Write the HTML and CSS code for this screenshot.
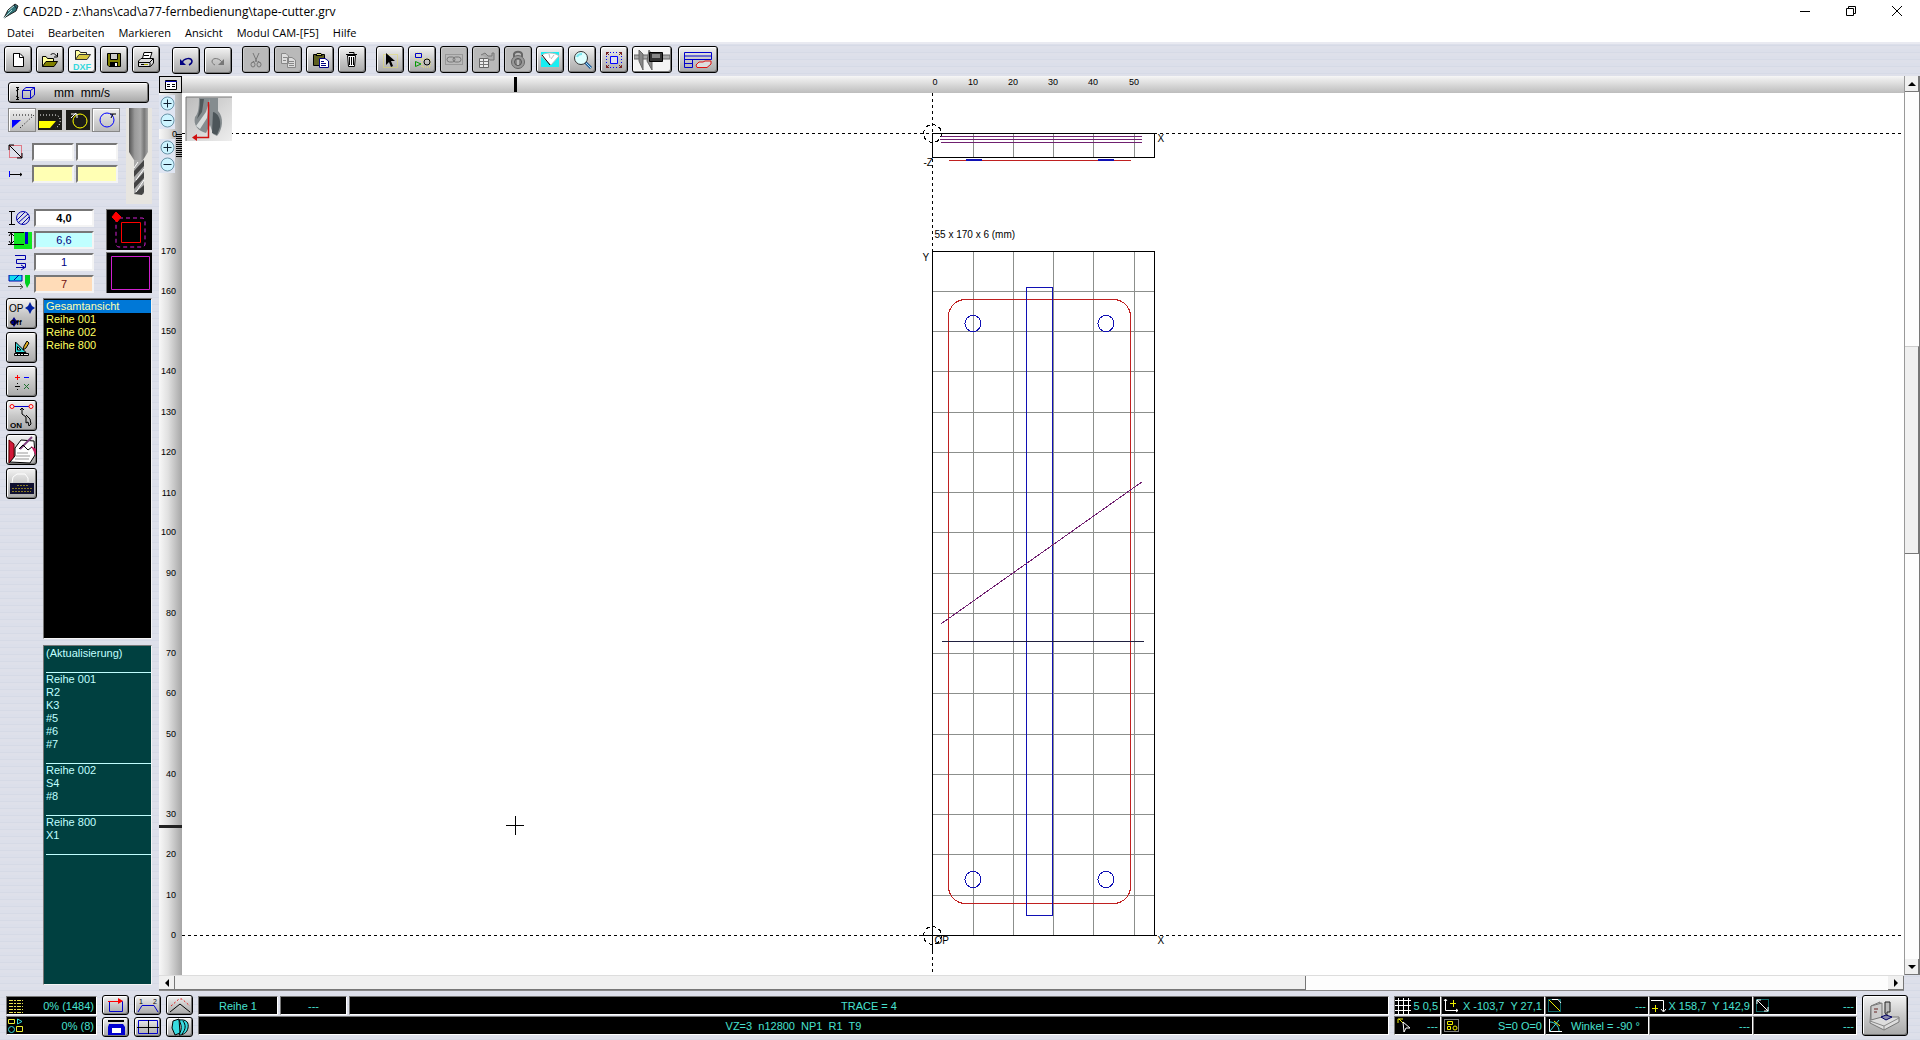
FILE: index.html
```html
<!DOCTYPE html>
<html lang="de">
<head>
    <meta charset="UTF-8">
    <meta name="viewport" content="width=device-width, initial-scale=1.0">
    <title>CAD2D - z:\hans\cad\a77-fernbedienung\tape-cutter.grv</title>
    <link rel="stylesheet" href="styles.css">
</head>
<body>
    <header class="titlebar">
        <svg class="app-icon" width="16" height="16" viewBox="0 0 16 16"><path d="M1 15L5 7L12 1L15 3L13 8L6 12Z" fill="#2f7377" stroke="#222"/><path d="M1 15L9 7M5 8L11 3" stroke="#b7dede"/><path d="M11 2L14 6" stroke="#123"/></svg>
        <span class="title">CAD2D - z:\hans\cad\a77-fernbedienung\tape-cutter.grv</span>
        <div class="window-buttons">
            <button aria-label="Minimieren"><svg width="10" height="10"><path d="M0 5.500H10" stroke="#000"/></svg></button>
            <button aria-label="Wiederherstellen"><svg width="10" height="10"><path d="M.5 2.500H7.500V9.500H.5ZM2.500 2V.5H9.500V7.500H8" fill="none" stroke="#000"/></svg></button>
            <button aria-label="Schließen"><svg width="10" height="10"><path d="M0 0L10 10M10 0L0 10" stroke="#000"/></svg></button>
        </div>
    </header>

    <nav class="menubar">
        <a href="#">Datei</a>
        <a href="#">Bearbeiten</a>
        <a href="#">Markieren</a>
        <a href="#">Ansicht</a>
        <a href="#">Modul CAM-[F5]</a>
        <a href="#">Hilfe</a>
    </nav>

    <div class="toolbar">
        <div class="group">
            <button class="btn" aria-label="Neu"><svg width="20" height="20"><path d="M5.500 3.500H12L15.500 7V16.500H5.500Z" fill="#fff" stroke="#000"/><path d="M11.500 4V7.500H15" fill="none" stroke="#000"/></svg></button>
            <button class="btn" aria-label="Öffnen"><svg width="20" height="20"><path d="M2.500 16.500V6.500H6L7.500 8.500H13.500V11" fill="#ffff9c" stroke="#000"/><path d="M2.500 16.500L6 11.500H17.500L14 16.500Z" fill="#808000" stroke="#000"/><path d="M10.500 5C12 3 15 3 16.500 6M17.500 3V7H14" fill="none" stroke="#000"/></svg></button>
            <button class="btn lit" aria-label="DXF öffnen"><svg width="24" height="24"><path d="M5.500 11.500V2.500H9L10.500 4.500H16.500V6" fill="#ffffa0" stroke="#222"/><path d="M5.500 11.500L9 6.500H20.500L17 11.500Z" fill="#d8c840" stroke="#333"/><text class="dxf" x="3" y="22">DXF</text></svg></button>
            <button class="btn" aria-label="Speichern"><svg width="20" height="20"><path d="M3.500 3.500H16.500V16.500H5L3.500 15Z" fill="#808000" stroke="#000"/><path d="M6.500 3.500H13.500V9.500H6.500Z" fill="#ccc" stroke="#000"/><path d="M6 12H14V16H6Z"/><path d="M11 13H13V16H11Z" fill="#fff"/></svg></button>
            <button class="btn" aria-label="Drucken"><svg width="20" height="20"><path d="M6.500 8.500L8 2.500H16L14 8.500Z" fill="#fff" stroke="#000"/><path d="M2.500 11L5 8.500H17.500V13L14.500 16.500H2.500Z" fill="#ddd" stroke="#000"/><path d="M3 12.500H14V16M14 12L17 9M5 14.500H11M8 5.500H13" fill="none" stroke="#000"/><path d="M8 14.500H12" stroke="#a6a600"/></svg></button>
        </div>
        <div class="group undo">
            <button class="btn" aria-label="Rückgängig"><svg width="20" height="20"><path d="M5.500 12C8 7 15 6 16 10C16 12 15 13 13 14" fill="none" stroke="#000080" stroke-width="1.500"/><path d="M4 8V14H10Z" fill="#000080"/></svg></button>
            <button class="btn" aria-label="Wiederholen"><svg width="20" height="20"><path d="M14.500 12C12 7 5 6 4 10C4 12 5 13 7 14" fill="none" stroke="#777"/><path d="M16 8V14H10Z" fill="#777"/></svg></button>
        </div>
        <div class="group">
            <button class="btn off" aria-label="Ausschneiden"><svg width="20" height="20"><path d="M7 3L11 12M13 3L9 12M8 11L6 13M12 11L14 13" stroke="#777" fill="none"/><ellipse cx="7" cy="14.500" rx="2" ry="2.500" fill="none" stroke="#777"/><ellipse cx="13" cy="14.500" rx="2" ry="2.500" fill="none" stroke="#777"/></svg></button>
            <button class="btn off" aria-label="Kopieren"><svg width="20" height="20"><path d="M3.500 3.500H8L10.500 6V13.500H3.500ZM9.500 7.500H14L17.500 10V17.500H9.500Z" fill="#ddd" stroke="#888"/><path d="M5 7.500H9M5 10.500H8M11 11.500H16M11 13.500H16M11 15.500H16" stroke="#888"/></svg></button>
            <button class="btn" aria-label="Einfügen"><svg width="20" height="20"><path d="M3.500 4.500H14.500V15.500H3.500Z" fill="#5f6020" stroke="#000"/><path d="M6 5.500L7 3.500H11L12 5.500Z" fill="#dd6" stroke="#000"/><path d="M9.500 8.500H15L18.500 11V17.500H9.500Z" fill="#fff" stroke="#000080"/><path d="M11 11.500H14M11 13.500H16M11 15.500H16" stroke="#000080"/></svg></button>
            <button class="btn" aria-label="Löschen"><svg width="20" height="20"><path d="M5.500 5.500H13.500L12.500 16.500H6.500Z" fill="#fff" stroke="#000"/><path d="M4 4.500H15M7 2.500H12V4M7.500 7V15M9.500 7V15M11.500 7V15" fill="none" stroke="#000"/></svg></button>
        </div>
        <div class="group">
            <button class="btn" aria-label="Auswählen"><svg width="20" height="20"><path d="M3.500 4.500H17.500V17.500H3.500Z" fill="none" stroke="#e4dc5c" stroke-dasharray="1 1"/><path d="M6 3V15L9 12L11 17L13 16L11 11H15Z"/></svg></button>
            <button class="btn" aria-label="Objekte"><svg width="20" height="20"><path d="M3 3H10V17H18V9H3Z" fill="none" stroke="#eee56a" stroke-dasharray="1 1"/><path d="M3.500 3.500H9.500V7.500H3.500Z" fill="none" stroke="#00c"/><path d="M3.500 11.500V16.500L9 14Z" fill="none" stroke="#090"/><circle cx="15" cy="12" r="3" fill="none" stroke="#000"/></svg></button>
            <button class="btn off" aria-label="Verbinden"><svg width="20" height="20"><path d="M1.500 4.500H18.500V14.500H1.500Z" fill="none" stroke="#777" stroke-dasharray="1 1"/><rect x="3" y="7" width="8" height="5" rx="2.500" fill="none" stroke="#777"/><rect x="9" y="7" width="8" height="5" rx="2.500" fill="none" stroke="#777"/></svg></button>
            <button class="btn off" aria-label="Eigenschaften"><svg width="20" height="20"><path d="M3.500 8.500H12.500V17.500H3.500Z" fill="#eee" stroke="#666"/><path d="M4 11.500H12M4 14.500H12M7.500 9V17" stroke="#777"/><path d="M5 5L9 3L12 6H16V3H18V10H14L11 8" fill="#aaa" stroke="#777"/></svg></button>
            <button class="btn off" aria-label="Sperren"><svg width="22" height="22"><path d="M7 8V5C8 2 14 2 15 5V8" fill="none" stroke="#666" stroke-width="2"/><circle cx="11" cy="13" r="6.500" fill="#999" stroke="#666"/><circle cx="11" cy="13" r="3.500" fill="#888" stroke="#555"/><path d="M10 11H12V16H10Z" fill="#bbb"/></svg></button>
            <button class="btn" aria-label="Ansicht"><svg width="20" height="20"><path d="M1 2H19V17H1Z" fill="#19eef2"/><path d="M1 6C4 2 15 2 19 6L11 15Z" fill="#fff" stroke="#bbb"/><path d="M2 5L10 15" stroke="#000"/><path d="M9 4L10 8M14 5L11 9" stroke="#bbb"/></svg></button>
            <button class="btn" aria-label="Zoom"><svg width="22" height="22"><path d="M14 13L20 19" stroke="#235b98" stroke-width="3"/><path d="M15 14L20 19" stroke="#9ce4ff"/><circle cx="10" cy="9" r="6.500" fill="#dff" stroke="#333"/><path d="M6 8C7 5 9 5 11 5" fill="none" stroke="#7be5ed" stroke-width="2"/></svg></button>
            <button class="btn" aria-label="Alles zeigen"><svg width="20" height="20"><path d="M6.500 6.500H13.500V13.500H6.500Z" fill="#dde" stroke="#00f"/><path d="M6 2.500H14M6 17.500H14M2.500 6V14M17.500 6V14" stroke="#00f" stroke-dasharray="1 2"/><path d="M5 2.500H2.500V5M2 2L5 5M15 2.500H17.500V5M18 2L15 5M5 17.500H2.500V15M2 18L5 15M15 17.500H17.500V15M18 18L15 15" fill="none" stroke="#722"/></svg></button>
            <button class="btn wide lit" aria-label="Messen"><svg width="36" height="24"><path d="M0 7H36V11H0Z" fill="#aaa" stroke="#666"/><path d="M5 2L9 6V22L5 13ZM15 2L18 7V22L13 13Z" fill="#888" stroke="#666"/><path d="M15.500 4.500H28.500V13.500H15.500Z" fill="#333" stroke="#000"/><path d="M18 6H26V10H18Z" fill="#888"/></svg></button>
        </div>
        <div class="group params-group">
            <button class="btn wide" aria-label="Parameter"><svg width="32" height="20"><path d="M2.500 2.500H29.500V9.500H2.500ZM2.500 6H29.500M2.500 9.500H10.500V17.500H2.500ZM2.500 13.500H10.500" fill="none" stroke="#00c"/><path d="M14 15L17 12H21L23 11H29V14L25 17.500H15Z" fill="#ddd" stroke="#e01010"/></svg></button>
        </div>
    </div>

    <main class="main">
        <aside class="side">
            <button class="btn units"><svg width="22" height="16"><path d="M2 2.500H5M2 14.500H5M3.500 3V14M2 6L5 4M2 11L5 13" stroke="#000"/><path d="M8.500 5.500H16.500V13.500H8.500ZM8.500 5.500L12 2.500H20.500L16.500 5.500M20.500 2.500V10L16.500 13.500" fill="none" stroke="#00c"/></svg><span>mm&nbsp; mm/s</span></button>

            <div class="tool-area">
                <div class="tool-left">
                    <div class="modes">
                        <button class="mode" aria-label="Offen"><svg width="24" height="20"><path d="M3 5H24L10 18" fill="none" stroke="#000" stroke-dasharray="1 2"/><path d="M2 10H11L2 18Z" fill="#00f"/></svg></button>
                        <button class="mode on" aria-label="Gerundet"><svg width="24" height="20"><path d="M2 5H17C24 5 24 16 17 18" fill="none" stroke="#fff" stroke-dasharray="1 2"/><path d="M1 11H18L12 18H1Z" fill="#ff0"/></svg></button>
                        <button class="mode on" aria-label="Kreis innen"><svg width="24" height="20"><circle cx="14" cy="11" r="7" fill="none" stroke="#ff0"/><path d="M5 4H11V8M10 3L5 8" fill="none" stroke="#fff"/></svg></button>
                        <button class="mode" aria-label="Kreis"><svg width="24" height="20"><circle cx="13" cy="10" r="7" fill="none" stroke="#00f"/><path d="M16 4H22M19 4L17 8" fill="none" stroke="#000"/></svg></button>
                    </div>
                    <div class="pair">
                        <svg width="16" height="16"><path d="M1.500 1.500H13.500V13.500H1.500Z" fill="none" stroke="#e01020" stroke-dasharray="1 1"/><path d="M1 1L14 14M1 6V1H6M9 14H14V9" fill="none" stroke="#000"/></svg>
                        <input type="text" aria-label="Breite"><input type="text" aria-label="Höhe">
                    </div>
                    <div class="pair yellow">
                        <svg width="16" height="16"><path d="M1.500 5V11" stroke="#00f"/><path d="M2 8.500H14M12 7L14 8.500L12 10" fill="none" stroke="#000"/></svg>
                        <input type="text" aria-label="Versatz X"><input type="text" aria-label="Versatz Y">
                    </div>
                </div>
                <svg class="cutter" width="26" height="96">
                    <defs>
                        <linearGradient id="steel"><stop offset="0" stop-color="#555"/><stop offset=".3" stop-color="#999"/><stop offset=".6" stop-color="#aaa"/><stop offset=".8" stop-color="#777"/><stop offset="1" stop-color="#aaa"/></linearGradient>
                    </defs>
                    <rect width="26" height="96" fill="#e7e5e0"/>
                    <path d="M3 0H22V44L17 52H8L3 44Z" fill="url(#steel)"/>
                    <path d="M8 52H18V86H8Z" fill="#aaa"/>
                    <path d="M8 63L18 52V58L8 69ZM8 75L18 64V70L8 81ZM8 86L18 77V84L16 87Z" fill="#444"/>
                    <path d="M12 54L8 60M18 61L10 72M18 72L10 84" stroke="#fff"/>
                </svg>
            </div>

            <div class="params">
                <div class="fields">
                    <label><svg width="24" height="18"><path d="M1 2.500H7M1 15.500H7M3.500 3V15" stroke="#000"/><circle cx="15" cy="9" r="6.500" fill="none" stroke="#00a"/><path d="M9 11L17 3M10 14L20 5M14 15L21 8" stroke="#00a"/></svg><input class="bold" type="text" value="4,0" aria-label="Durchmesser"></label>
                    <label class="cyan"><svg width="24" height="18"><path d="M6 1H24V18H6Z" fill="#10e820"/><path d="M0 1.500H16M0 13.500H16M3.500 2V13M1 5L3 2L6 5M1 10L3 13L6 10" fill="none" stroke="#000"/><path d="M17 1H20V13H17Z" fill="#00c"/></svg><input type="text" value="6,6" aria-label="Tiefe"></label>
                    <label><svg width="24" height="18"><path d="M7 2.500H17.500V6.500H8.500V10.500H17.500V14.500H8M13 12L17 14.500L13 17" fill="none" stroke="#00a"/></svg><input type="text" value="1" aria-label="Durchläufe"></label>
                    <label class="peach"><svg width="24" height="18"><path d="M1 0H14V6H1Z" fill="#1de" stroke="#00a"/><path d="M6 5L11 0" stroke="#00a"/><path d="M0 11.500H15M12 9L15 12L12 14" fill="none" stroke="#555"/><path d="M17 0H22V8L19 13L17 8Z" fill="#00d020"/></svg><input class="red" type="text" value="7" aria-label="Werkzeug"></label>
                </div>
                <div class="previews">
                    <svg class="preview" width="46" height="41"><rect x="9" y="8" width="29" height="29" rx="3" fill="none" stroke="#d020d0" stroke-dasharray="4 3"/><path d="M14.500 12.500H33.500V32.500H14.500Z" fill="none" stroke="#f00"/><path d="M5 7L9 2L14 7L10 12Z" fill="#f00" stroke="#f00"/></svg>
                    <svg class="preview" width="46" height="41"><path d="M4.500 3.500H42.500V36.500H4.500Z" fill="none" stroke="#d020d0"/></svg>
                </div>
            </div>

            <div class="lower">
                <div class="tools">
                    <button class="btn" aria-label="Optimieren aus"><svg width="28" height="28"><text x="1" y="12" class="icon-text">OP</text><path d="M22 2L24 6L27 8L24 10L22 14L20 10L17 8L20 6Z" fill="#0020a0"/><path d="M6 17L8 20L11 22L8 24L6 27L4 24L2 22L4 20Z" fill="#000080"/><text x="2" y="25" class="icon-text small">Off</text></svg></button>
                    <button class="btn" aria-label="Zeichnen"><svg width="24" height="24"><path d="M5.500 6V16.500H16Z" fill="#3dd" stroke="#000"/><path d="M7.500 10.500V14H11Z" fill="#ddd" stroke="#000"/><path d="M4.500 17.500H18.500V19.500H4.500Z" fill="#eee" stroke="#000"/><path d="M7.500 18V19M10.500 18V19M13.500 18V19" stroke="#000"/><path d="M13 14L14 10L17 5L19 7L16 12Z" fill="#e4b020" stroke="#000"/></svg></button>
                    <button class="btn" aria-label="Rechner"><svg width="24" height="24"><path d="M5 7.500H10M7.500 5V10" stroke="#f00"/><path d="M14 7.500H19" stroke="#00f"/><path d="M5 16.500H10M7 13.500H8M7 19.500H8" stroke="#000"/><path d="M14 14L19 19M19 14L14 19" stroke="#1c6f2c"/></svg></button>
                    <button class="btn" aria-label="Fangen ein"><svg width="28" height="28"><path d="M5 4.500H22" stroke="#00c"/><circle cx="4" cy="4.500" r="2" fill="#eee" stroke="#f00"/><circle cx="23" cy="4.500" r="2" fill="#eee" stroke="#f00"/><path d="M14 6V12L18 15V21L20 20L21 24L23 22L22 17L18 13M12 8L14 6L16 8" fill="none" stroke="#000"/><text x="2" y="26" class="icon-text small">ON</text></svg></button>
                    <button class="btn" aria-label="Beenden"><svg width="28" height="28"><path d="M1 4L6 8V22L1 27Z" fill="#d01838" stroke="#600"/><path d="M7 12L13 4L26 5L27 19L22 27L2 26L7 20Z" fill="#fff" stroke="#000"/><path d="M12 13L24 1" fill="none" stroke="#804080" stroke-width="2"/><path d="M11 13L15 9L20 14L24 11" fill="none" stroke="#000"/><path d="M9 17H20M8 20H22M7 23H21" stroke="#999"/><path d="M23 10L28 13V20" fill="#c02060"/></svg></button>
                    <button class="btn" aria-label="Makro"><svg width="28" height="28"><path d="M4 13L5 7L9 4H17L20 8V12" fill="none" stroke="#fff"/><path d="M2 13H26V24H2Z" fill="#101030"/><path d="M9 15.500H20M4 18.500H24M4 21.500H23" stroke="#887b24" stroke-dasharray="2 1"/></svg></button>
                </div>
                <div class="lists">
                    <select class="layers" size="20" aria-label="Reihen">
                        <option selected>Gesamtansicht</option>
                        <option>Reihe 001</option>
                        <option>Reihe 002</option>
                        <option>Reihe 800</option>
                    </select>
                    <div class="objects">
                        <p>(Aktualisierung)</p>
                        <ul>
                            <li>Reihe 001</li>
                            <li>R2</li>
                            <li>K3</li>
                            <li>#5</li>
                            <li>#6</li>
                            <li>#7</li>
                        </ul>
                        <ul>
                            <li>Reihe 002</li>
                            <li>S4</li>
                            <li>#8</li>
                        </ul>
                        <ul>
                            <li>Reihe 800</li>
                            <li>X1</li>
                        </ul>
                    </div>
                </div>
            </div>
        </aside>

        <section class="work">
            <button class="corner" aria-label="Tabelle"><svg width="14" height="12"><path d="M1.500 1.500H12.500V10.500H1.500Z" fill="#fff" stroke="#000"/><path d="M1 2.500H13" stroke="#00a"/><path d="M3 5.500H6M8 5.500H11M3 7.500H6M8 7.500H11" stroke="#000"/></svg></button>

            <svg class="ruler-x">
                <g text-anchor="middle">
                    <text x="753" y="9">0</text><text x="791" y="9">10</text><text x="831" y="9">20</text><text x="871" y="9">30</text><text x="911" y="9">40</text><text x="952" y="9">50</text>
                </g>
                <rect x="332" y="1" width="3" height="15"/>
            </svg>

            <div class="ruler-y">
                <svg>
                    <g text-anchor="end">
                        <text x="18" y="44">0</text>
                        <text x="17" y="161">170</text><text x="17" y="201">160</text><text x="17" y="241">150</text>
                        <text x="17" y="281">140</text><text x="17" y="322">130</text><text x="17" y="362">120</text>
                        <text x="17" y="403">110</text><text x="17" y="442">100</text><text x="17" y="483">90</text>
                        <text x="17" y="523">80</text><text x="17" y="563">70</text><text x="17" y="603">60</text>
                        <text x="17" y="644">50</text><text x="17" y="684">40</text><text x="17" y="724">30</text>
                        <text x="17" y="764">20</text><text x="17" y="805">10</text><text x="17" y="845">0</text>
                    </g>
                    <path d="M20 41V65" stroke="#000" stroke-width="6" stroke-dasharray="1 1"/>
                    <rect y="732" width="23" height="3" fill="#222"/>
                </svg>
                <div class="zoom-pair first">
                    <button aria-label="Vergrößern"><svg width="15" height="15"><circle cx="7.500" cy="7.500" r="6.500" fill="#cdf4ff" stroke="#6a94a8"/><path d="M3.500 7.500H11.500M7.500 3.500V11.500" stroke="#123"/></svg></button>
                    <button aria-label="Verkleinern"><svg width="15" height="15"><circle cx="7.500" cy="7.500" r="6.500" fill="#cdf4ff" stroke="#6a94a8"/><path d="M3.500 7.500H11.500" stroke="#123"/></svg></button>
                </div>
                <div class="zoom-pair second">
                    <button aria-label="Höhe vergrößern"><svg width="15" height="15"><circle cx="7.500" cy="7.500" r="6.500" fill="#cdf4ff" stroke="#6a94a8"/><path d="M3.500 7.500H11.500M7.500 3.500V11.500" stroke="#123"/></svg></button>
                    <button aria-label="Höhe verkleinern"><svg width="15" height="15"><circle cx="7.500" cy="7.500" r="6.500" fill="#cdf4ff" stroke="#6a94a8"/><path d="M3.500 7.500H11.500" stroke="#123"/></svg></button>
                </div>
            </div>

            <svg class="canvas">
                <defs>
                    <linearGradient id="tile" x2="1" y2="1"><stop offset="0" stop-color="#bbb"/><stop offset="1" stop-color="#eee"/></linearGradient>
                </defs>
                <!-- axes -->
                <g class="axis">
                    <line x1="0" y1="40.500" x2="100%" y2="40.500"/>
                    <line x1="0" y1="842.500" x2="100%" y2="842.500"/>
                    <line x1="750.500" y1="0" x2="750.500" y2="100%"/>
                </g>

                <!-- cutter position -->
                <g transform="translate(4 4)">
                    <rect width="46" height="44" fill="url(#tile)"/>
                    <path d="M0 44V0H46" fill="none" stroke="#777"/>
                    <path d="M13 1H32V14C38 20 37 32 31 39L27 37L24 28L20 36C12 34 7 28 9 20C12 17 13 12 13 1Z" fill="#858c8f"/>
                    <path d="M24 2L20 15L10 29L14 32L21 21Z" fill="#d8dcdc"/>
                    <path d="M27 15C32 16 35 22 34 30L31 38L26 36Z" fill="#4c5559"/>
                    <path d="M14 2H18L16 15L11 22C13 16 14 10 14 2Z" fill="#50585b"/>
                    <path d="M22.500 5V40.500H8" fill="none" stroke="#d01010" stroke-width="1.500"/>
                    <path d="M6 40.500L11 37V44Z" fill="#d01010"/>
                </g>

                <!-- side view -->
                <g transform="translate(750.500 40.500)" class="shape">
                    <path class="grid" d="M41 0V24M81 0V24M121 0V24M161 0V24M202 0V24"/>
                    <path class="purple" d="M8 3H209M7 6H209M8 9H209"/>
                    <path class="outline" d="M0 0H222V24H0Z"/>
                    <path class="red" d="M16 27H198"/>
                    <path class="blue thick" d="M33 26H49M165 26H181"/>
                    <circle class="zero" r="9"/>
                    <text x="225" y="8">X</text>
                    <text x="-9" y="32">-Z</text>
                </g>

                <!-- top view -->
                <g transform="translate(750.500 842.500)" class="shape">
                    <path class="grid" d="M41 0V-684M81 0V-684M121 0V-684M161 0V-684M202 0V-684"/>
                    <path class="grid" d="M0-40H222M0-81H222M0-121H222M0-161H222M0-201H222M0-242H222M0-282H222M0-322H222M0-362H222M0-403H222M0-443H222M0-483H222M0-523H222M0-564H222M0-604H222M0-644H222"/>
                    <rect class="red" x="16" y="-636" width="182" height="604" rx="17"/>
                    <rect class="blue" x="94" y="-648" width="26" height="628"/>
                    <circle class="blue" cx="40.500" cy="-612" r="8"/>
                    <circle class="blue" cx="173.500" cy="-612" r="8"/>
                    <circle class="blue" cx="40.500" cy="-56" r="8"/>
                    <circle class="blue" cx="173.500" cy="-56" r="8"/>
                    <path class="purple" d="M9-312L210-454"/>
                    <path class="navy" d="M9-294H211"/>
                    <rect class="outline" y="-684" width="222" height="684"/>
                    <path class="outline" d="M0 0V16M-14 0H0"/>
                    <circle class="zero" r="9"/>
                    <text x="2" y="-698">55 x 170 x 6 (mm)</text>
                    <text x="-10" y="-675">Y</text>
                    <text x="225" y="8">X</text>
                    <text x="2" y="8">OP</text>
                </g>

                <path d="M324 732.500H342M333.500 723V742" stroke="#000"/>
            </svg>

            <div class="scroll-y">
                <button class="arrow" aria-label="Nach oben"><svg width="8" height="4"><path d="M0 4L4 0L8 4Z"/></svg></button>
                <div class="track"><div class="thumb"></div></div>
                <button class="arrow" aria-label="Nach unten"><svg width="8" height="4"><path d="M0 0H8L4 4Z"/></svg></button>
            </div>
            <div class="scroll-x">
                <button class="arrow" aria-label="Nach links"><svg width="4" height="8"><path d="M4 0V8L0 4Z"/></svg></button>
                <div class="track"><div class="thumb"></div></div>
                <button class="arrow" aria-label="Nach rechts"><svg width="4" height="8"><path d="M0 0V8L4 4Z"/></svg></button>
            </div>
        </section>
    </main>

    <footer class="status">
        <div class="col usage">
            <div class="cell end"><svg width="18" height="16"><path d="M2 2.500H16M2 5.500H16M2 8.500H16M2 11.500H16M2 14.500H16" stroke="#e8e050" stroke-dasharray="4 1 2 1"/></svg><span>0% (1484)</span></div>
            <div class="cell end"><svg width="18" height="16"><path d="M1.500 1.500H7.500V5.500H1.500ZM9.500 8.500H15.500V13.500H9.500Z" fill="none" stroke="#ee3"/><path d="M10.500 1V6L15 3.500Z" fill="none" stroke="#3dd"/><circle cx="4.500" cy="11.500" r="3" fill="none" stroke="#3dd"/></svg><span>0% (8)</span></div>
        </div>
        <div class="views">
            <button class="btn" aria-label="Kontur"><svg width="22" height="16"><path d="M4.500 4.500H17.500V14.500H4.500Z" fill="none" stroke="#00c"/><path d="M3 4.500H14" stroke="#f00"/><path d="M13 1L18 4L13 7Z" fill="#f00"/></svg></button>
            <button class="btn" aria-label="Abstand"><svg width="22" height="16"><path d="M1 15L5 8.500H17L21 15" fill="none" stroke="#00c"/><text class="digit" x="2" y="7">1</text><text class="digit" x="16" y="7">2</text></svg></button>
            <button class="btn" aria-label="Profil"><svg width="22" height="16"><path d="M1 15L11 7L21 15" fill="none" stroke="#000"/><path d="M2 9L10 2H13L21 9" fill="none" stroke="#e02020" stroke-dasharray="2 2"/></svg></button>
            <button class="btn" aria-label="Speicherbild"><svg width="22" height="16"><path d="M3 1H19V3H3Z"/><path d="M4 5H18L20 8V16H3V8Z" fill="#0000d0"/><path d="M7 9H16V14H7Z" fill="#fff"/></svg></button>
            <button class="btn" aria-label="Vier Ansichten"><svg width="22" height="16"><path d="M1.500 1.500H20.500V14.500H1.500Z" fill="none" stroke="#00c"/><path d="M11.500 1V15M0 8.500H22" stroke="#000"/></svg></button>
            <button class="btn" aria-label="3D"><svg width="22" height="18"><path d="M4 3L10 1L11 15L6 17L3 10Z" fill="#38dbe0" stroke="#000"/><path d="M10 2C18 1 20 5 19 10C18 15 14 17 10 17C13 11 13 8 10 2Z" fill="#38dbe0" stroke="#000"/><path d="M14 3C17 7 17 11 13 16" fill="none" stroke="#000"/></svg></button>
        </div>
        <div class="col messages">
            <div class="line">
                <div class="cell row-name">Reihe 1</div>
                <div class="cell row-extra">---</div>
                <div class="cell grow">TRACE = 4</div>
            </div>
            <div class="cell grow">VZ=3&nbsp; n12800&nbsp; NP1&nbsp; R1&nbsp; T9</div>
        </div>
        <div class="coords">
            <div class="cell end"><svg width="16" height="18"><path d="M3.500 1V17M8.500 1V17M13.500 1V17M0 3.500H16M0 8.500H16M0 13.500H16" stroke="#fff"/></svg><span>5 0,5</span></div>
            <div class="cell end"><svg width="18" height="18"><path d="M3.500 2V13.500H16M2 4L3.500 2L5 4M14 12L16 13.500L14 15" fill="none" stroke="#fff"/><path d="M8 6.500H14M11.500 3V10" stroke="#ee0"/></svg><span>X -103,7&nbsp; Y 27,1</span></div>
            <div class="cell end"><svg width="18" height="18"><path d="M2.500 2.500H14.500V14.500H2.500Z" fill="none" stroke="#2cc" stroke-dasharray="1 1"/><path d="M3 3L14 14" stroke="#ee0"/><path d="M6 2.500H12L15 6" fill="none" stroke="#fff"/></svg><span>---</span></div>
            <div class="cell end"><svg width="16" height="18"><path d="M1 3.500H13.500V14M11 12L13.500 15L16 12" fill="none" stroke="#fff"/><path d="M2 11.500H8M5.500 8V15" stroke="#ee0"/></svg><span>X 158,7&nbsp; Y 142,9</span></div>
            <div class="cell end"><svg width="18" height="18"><path d="M2.500 2.500H14.500V14.500H2.500Z" fill="none" stroke="#2cc" stroke-dasharray="1 1"/><path d="M3 3L14 14M3 7V3H7M10 14H14V10" fill="none" stroke="#fff"/></svg><span>---</span></div>
            <div class="cell end"><svg width="18" height="18"><path d="M4 2L8 6M3 6V2H8" fill="none" stroke="#ee0"/><path d="M8 5L15 11L11 11L9 15Z" fill="none" stroke="#fff"/></svg><span>---</span></div>
            <div class="cell end"><svg width="18" height="18"><path d="M2.500 2.500H16.500V14.500H2.500Z" fill="none" stroke="#fff" stroke-dasharray="1 1"/><path d="M5.500 4.500H10.500V7.500H5.500ZM5.500 9.500H8.500V12.500H5.500Z" fill="none" stroke="#ee0"/><circle cx="13" cy="11" r="2" fill="none" stroke="#ee0"/></svg><span>S=0 O=0</span></div>
            <div class="cell angle"><svg width="18" height="18"><path d="M3.500 2V14.500H16" fill="none" stroke="#fff"/><path d="M4 14L13 3M4 5C9 5 13 9 13 14" fill="none" stroke="#3dd"/><path d="M8 4L14 9" stroke="#ee0"/></svg><span>Winkel = -90 °</span></div>
            <div class="cell end"><span>---</span></div>
            <div class="cell end"><span>---</span></div>
        </div>
        <button class="btn machine" aria-label="Maschine"><svg width="34" height="32"><path d="M3 6L12 2V17L31 17V22L16 30L2 23Z" fill="#ddd" stroke="#777"/><path d="M3 6L14 3V17L3 20Z" fill="#ccc" stroke="#777"/><path d="M2 21L16 26L31 18M16 26V30" fill="none" stroke="#888"/><path d="M17 2H22V12H19V16L17 13Z" fill="#bbb" stroke="#222"/><path d="M13 17L18 15L24 17L18 20Z" fill="#88a" stroke="#006"/><path d="M6 9H10M6 12H9" stroke="#622"/></svg></button>
    </footer>
</body>
</html>
```

FILE: styles.css
```css
* {
    box-sizing: border-box;
}
body {
    margin: 0;
    height: 100vh;
    display: flex;
    flex-direction: column;
    overflow: hidden;
    font-family: "Liberation Sans", Arial, sans-serif;
    font-size: 11px;
    color: #000;
    background: repeating-linear-gradient(#dcdfea 0 3px, #d6dae6 3px 4px, #dee0ea 4px 7px);
}
button {
    padding: 0;
    border: 0;
    font: inherit;
    background: none;
    display: flex;
    align-items: center;
    justify-content: center;
}
svg {
    display: block;
    flex: none;
}

/* title and menu */
.titlebar {
    display: flex;
    align-items: center;
    height: 22px;
    padding-left: 3px;
    background: #fff;
    font-family: "Open Sans", sans-serif;
    font-size: 12px;
}
.title {
    padding-left: 4px;
}
.window-buttons {
    display: flex;
    margin-left: auto;
}
.window-buttons button {
    width: 46px;
    height: 22px;
}
.menubar {
    display: flex;
    align-items: center;
    gap: 14px;
    height: 20px;
    padding: 0 7px;
    background: #fff;
    font-family: "Open Sans", sans-serif;
    font-size: 11px;
}
.menubar a {
    color: #000;
    text-decoration: none;
}

/* buttons */
.btn {
    border: 1px solid #000;
    border-radius: 3px;
    background: linear-gradient(#f2f2f2, #c9c9c9 50%, #a9a9a9);
    box-shadow: inset 1px 1px 0 #fff, inset -1px -1px 0 #777;
    overflow: hidden;
}
.btn.off {
    background: #b9b9b9;
    box-shadow: inset 1px 1px 0 #ccc, inset -1px -1px 0 #999;
}
.btn.lit {
    background: #f4f4f4;
}
.toolbar {
    display: flex;
    align-items: flex-start;
    gap: 10px;
    height: 34px;
    padding: 2px 4px 0;
    border-top: 2px solid #e9eaf1;
}
.group {
    display: flex;
    gap: 4px;
}
.group.undo {
    margin: 1px 0 0 2px;
}
.group.params-group {
    margin-left: -4px;
}
.toolbar .btn {
    width: 28px;
    height: 27px;
}
.toolbar .btn.wide {
    width: 40px;
}
.dxf {
    font-size: 9px;
    font-weight: bold;
    fill: #35d7dc;
}

.main {
    flex: 1;
    min-height: 0;
    display: flex;
}

/* left panel */
.side {
    width: 159px;
    display: flex;
    flex-direction: column;
    padding: 6px 7px 6px 6px;
}
.units {
    height: 21px;
    margin: 0 3px 5px 2px;
    justify-content: flex-start;
    padding-left: 5px;
    gap: 18px;
    font-size: 12px;
}
.tool-area {
    display: flex;
    justify-content: space-between;
    margin-left: 2px;
    height: 101px;
}
.modes {
    display: flex;
    margin-bottom: 11px;
}
.mode {
    width: 28px;
    height: 24px;
    border: 1px solid #888;
    background: linear-gradient(#eee, #bbb);
    box-shadow: inset 1px 1px 0 #fff;
}
.mode.on {
    background: #1c1c18;
    border: 2px solid #ccc;
    box-shadow: none;
    overflow: hidden;
}
.side input {
    width: 42px;
    height: 18px;
    padding: 0;
    border: 2px solid;
    border-color: #777 #f4f4f4 #f4f4f4 #777;
    background: #fff;
    font-family: "Liberation Sans", Arial, sans-serif;
    font-size: 11px;
    text-align: center;
    color: #000080;
}
.pair {
    display: flex;
    align-items: center;
    gap: 2px;
    margin-bottom: 4px;
}
.pair svg {
    margin-right: 6px;
}
.side .yellow input {
    background: #ffffb4;
}
.params {
    display: flex;
    justify-content: space-between;
    margin: 0 0 5px 2px;
}
.fields {
    display: flex;
    flex-direction: column;
    gap: 4px;
}
.fields label {
    display: flex;
    align-items: center;
    gap: 2px;
    height: 18px;
}
.side .fields input {
    width: 60px;
}
.side .cyan input {
    background: #c0ffff;
}
.side .peach input {
    background: #ffdcb8;
}
.side input.bold {
    font-weight: bold;
    color: #000;
}
.side input.red {
    color: #701010;
}
.previews {
    display: flex;
    flex-direction: column;
    gap: 2px;
}
.preview {
    background: #000;
    border-top: 1px solid #777;
    border-left: 1px solid #777;
}
.lower {
    flex: 1;
    min-height: 0;
    display: flex;
    gap: 6px;
}
.tools {
    display: flex;
    flex-direction: column;
    gap: 3px;
}
.tools .btn {
    width: 31px;
    height: 31px;
}
.icon-text {
    font-size: 10px;
}
.icon-text.small {
    font-size: 8px;
    font-weight: bold;
}
.lists {
    flex: 1;
    min-width: 0;
    display: flex;
    flex-direction: column;
    gap: 6px;
}
.layers, .objects {
    flex: 1;
    min-height: 0;
    border: 1px solid;
    border-color: #777 #f4f4f4 #f4f4f4 #777;
    font-family: "Liberation Sans", Arial, sans-serif;
    font-size: 11px;
    line-height: 13px;
}
.layers {
    width: 100%;
    padding: 1px 0;
    border-radius: 0;
    background: #000;
    color: #ffff60;
    overflow: hidden;
    outline: none;
}
.layers option {
    height: 13px;
    min-height: 13px;
    padding: 0 2px;
    line-height: 13px;
}
.layers option:checked {
    background: linear-gradient(#0078d7, #0078d7);
    -webkit-text-fill-color: #ffffb0;
}
.objects {
    padding: 1px 0 0 2px;
    background: #004040;
    color: #c0ffff;
}
.objects p, .objects ul {
    margin: 0;
    padding: 0 0 12px;
    list-style: none;
    border-bottom: 1px solid #c0ffff;
}

/* drawing area */
.work {
    flex: 1;
    min-width: 0;
    display: grid;
    grid-template-columns: 23px 1fr 16px;
    grid-template-rows: 17px 1fr 16px;
}
.corner {
    border: 1px solid #000;
    background: #ddd;
}
.work text {
    font-size: 9px;
}
.work .canvas text {
    font-size: 10px;
}
.ruler-x {
    width: 100%;
    height: 17px;
    background: linear-gradient(#f6f6f6, #bdbdbd);
}
.ruler-y {
    grid-row: 2;
    position: relative;
    min-height: 0;
    overflow: hidden;
    background: linear-gradient(90deg, #f8f8f8, #e0e0e0 40%, #a6a6a6);
}
.ruler-y svg {
    width: 100%;
    height: 100%;
}
.zoom-pair {
    position: absolute;
    left: 0;
    width: 16px;
    background: #dfe5f2;
}
.zoom-pair.first {
    top: 2px;
}
.zoom-pair.second {
    top: 46px;
}
.zoom-pair button {
    width: 16px;
    height: 17px;
}
.zoom-pair button svg {
    width: 15px;
    height: 15px;
}
.canvas {
    grid-row: 2;
    grid-column: 2;
    width: 100%;
    height: 100%;
    min-height: 0;
    background: #fff;
}
.axis line {
    stroke: #000;
    stroke-dasharray: 3 3;
}
.shape path, .shape rect, .shape circle {
    fill: none;
    stroke: #000;
    shape-rendering: crispEdges;
}
.shape .grid {
    stroke: #8c8f8c;
}
.shape .red {
    stroke: #c02020;
}
.shape .blue {
    stroke: #1010b4;
}
.shape .thick {
    stroke-width: 2;
}
.shape .purple {
    stroke: #702070;
}
.shape .navy {
    stroke: #202040;
}
.shape .zero {
    stroke-dasharray: 4 3;
}

/* scrollbars */
.scroll-x, .scroll-y {
    display: flex;
    background: #fdfdfd;
}
.scroll-x {
    grid-row: 3;
    grid-column: 1 / 3;
    border-top: 1px solid #ddd;
    border-bottom: 1px solid #888;
}
.scroll-y {
    grid-row: 1 / 3;
    grid-column: 3;
    flex-direction: column;
    border-left: 1px solid #999;
    border-right: 1px solid #777;
}
.track {
    flex: 1;
    min-height: 0;
    display: flex;
}
.arrow {
    width: 16px;
    height: 16px;
    background: #f0f0f0;
    border-right: 1px solid #777;
    border-bottom: 1px solid #777;
}
.scroll-x .arrow {
    height: 14px;
}
.scroll-y .arrow {
    width: 14px;
}
.thumb {
    background: #f0f0f0;
    border-right: 1px solid #777;
    border-bottom: 1px solid #777;
}
.scroll-x .thumb {
    width: 66%;
}
.scroll-y .track {
    flex-direction: column;
    padding-top: 254px;
}
.scroll-y .thumb {
    height: 34%;
    border-top: 1px solid #ccc;
}

/* status bar */
.status {
    display: flex;
    align-items: center;
    height: 49px;
    padding: 0 12px 0 6px;
    gap: 5px;
}
.col {
    display: flex;
    flex-direction: column;
    gap: 1px;
}
.cell {
    display: flex;
    align-items: center;
    justify-content: center;
    height: 19px;
    border: 1px solid;
    border-color: #777 #fff #fff #777;
    background: #000;
    color: #48e0d0;
    white-space: nowrap;
    overflow: hidden;
}
.cell.end {
    justify-content: space-between;
    padding: 0 2px 0 0;
}
.cell.end span {
    margin-left: auto;
}
.usage {
    width: 91px;
}
.views {
    display: grid;
    grid-template-columns: repeat(3, 27px);
    gap: 2px 5px;
}
.views .btn {
    height: 20px;
}
.digit {
    font-size: 7px;
}
.messages {
    flex: 1;
    min-width: 0;
}
.line {
    display: flex;
    gap: 2px;
}
.row-name {
    width: 80px;
}
.row-extra {
    width: 67px;
}
.line .grow {
    flex: 1;
}
.coords {
    display: grid;
    grid-template-columns: 47px repeat(4, 104px);
    gap: 1px 0;
}
.angle {
    justify-content: flex-start;
    gap: 7px;
}
.machine {
    width: 46px;
    height: 41px;
}
```
